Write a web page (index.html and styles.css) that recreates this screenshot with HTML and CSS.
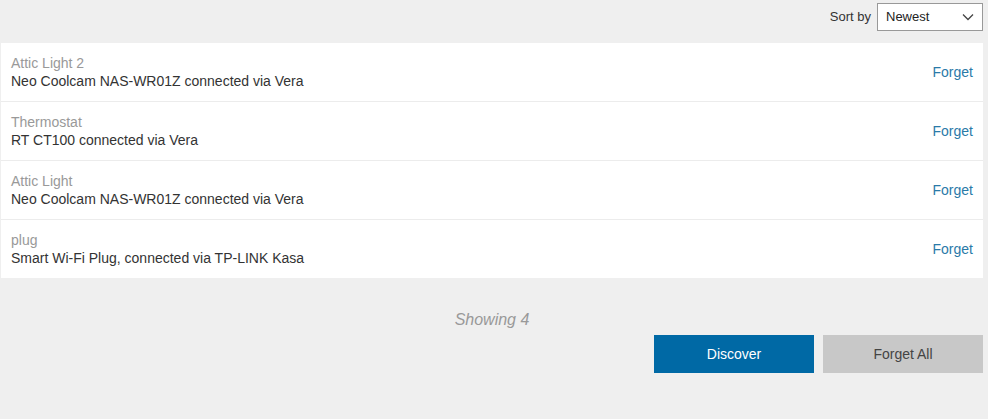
FILE: index.html
```html
<!DOCTYPE html>
<html lang="en">
<head>
  <meta charset="UTF-8">
  <title>Devices</title>
  <link rel="stylesheet" href="styles.css">
</head>
<body>
  <div class="toolbar">
    <label for="sort">Sort by</label>
    <div class="select">
      <span>Newest</span>
      <svg width="12" height="8" viewBox="0 0 12 8"><path d="M1 1.5 L6 6.5 L11 1.5" fill="none" stroke="#444" stroke-width="1.3"/></svg>
    </div>
  </div>

  <ul class="devices">
    <li>
      <div class="info">
        <div class="name">Attic Light 2</div>
        <div class="desc">Neo Coolcam NAS-WR01Z connected via Vera</div>
      </div>
      <a class="forget" href="#">Forget</a>
    </li>
    <li>
      <div class="info">
        <div class="name">Thermostat</div>
        <div class="desc">RT CT100 connected via Vera</div>
      </div>
      <a class="forget" href="#">Forget</a>
    </li>
    <li>
      <div class="info">
        <div class="name">Attic Light</div>
        <div class="desc">Neo Coolcam NAS-WR01Z connected via Vera</div>
      </div>
      <a class="forget" href="#">Forget</a>
    </li>
    <li>
      <div class="info">
        <div class="name">plug</div>
        <div class="desc">Smart Wi-Fi Plug, connected via TP-LINK Kasa</div>
      </div>
      <a class="forget" href="#">Forget</a>
    </li>
  </ul>

  <p class="count">Showing 4</p>

  <div class="actions">
    <button class="primary">Discover</button>
    <button class="secondary">Forget All</button>
  </div>
</body>
</html>
```

FILE: styles.css
```css
body {
  font-family: "Liberation Sans", Arial, sans-serif;
  font-size: 14px;
  color: #333;
  background: #efefef;
  margin: 0;
  padding: 2px 5px 0 1px;
}
.toolbar {
  display: flex;
  justify-content: flex-end;
  align-items: center;
  gap: 6px;
  height: 29px;
  font-size: 13px;
}
.toolbar label {
  color: #333;
}
.select {
  display: flex;
  justify-content: space-between;
  align-items: center;
  width: 106px;
  height: 28px;
  padding: 0 8px;
  box-sizing: border-box;
  border: 1px solid #999;
  background: #fff;
  color: #222;
  font-size: 13px;
}
.devices {
  list-style: none;
  margin: 12px 0 0;
  padding: 0;
  background: #fff;
}
.devices li {
  display: flex;
  justify-content: space-between;
  align-items: center;
  padding: 11px 10px;
  border-top: 1px solid #ececec;
  line-height: 18px;
}
.devices li:first-child {
  border-top: none;
}
.name {
  color: #999;
}
.desc {
  color: #333;
}
.forget {
  color: #2a7aa8;
  text-decoration: none;
}
.count {
  text-align: center;
  font-style: italic;
  font-size: 16px;
  color: #999;
  margin: 33px 0 0;
  line-height: 18px;
}
.actions {
  display: flex;
  justify-content: flex-end;
  gap: 9px;
  margin-top: 6px;
}
.actions button {
  width: 160px;
  height: 38px;
  border: none;
  font-family: inherit;
  font-size: 14px;
  cursor: pointer;
}
.primary {
  background: #0069a5;
  color: #fff;
}
.secondary {
  background: #c8c8c8;
  color: #444;
}
```
